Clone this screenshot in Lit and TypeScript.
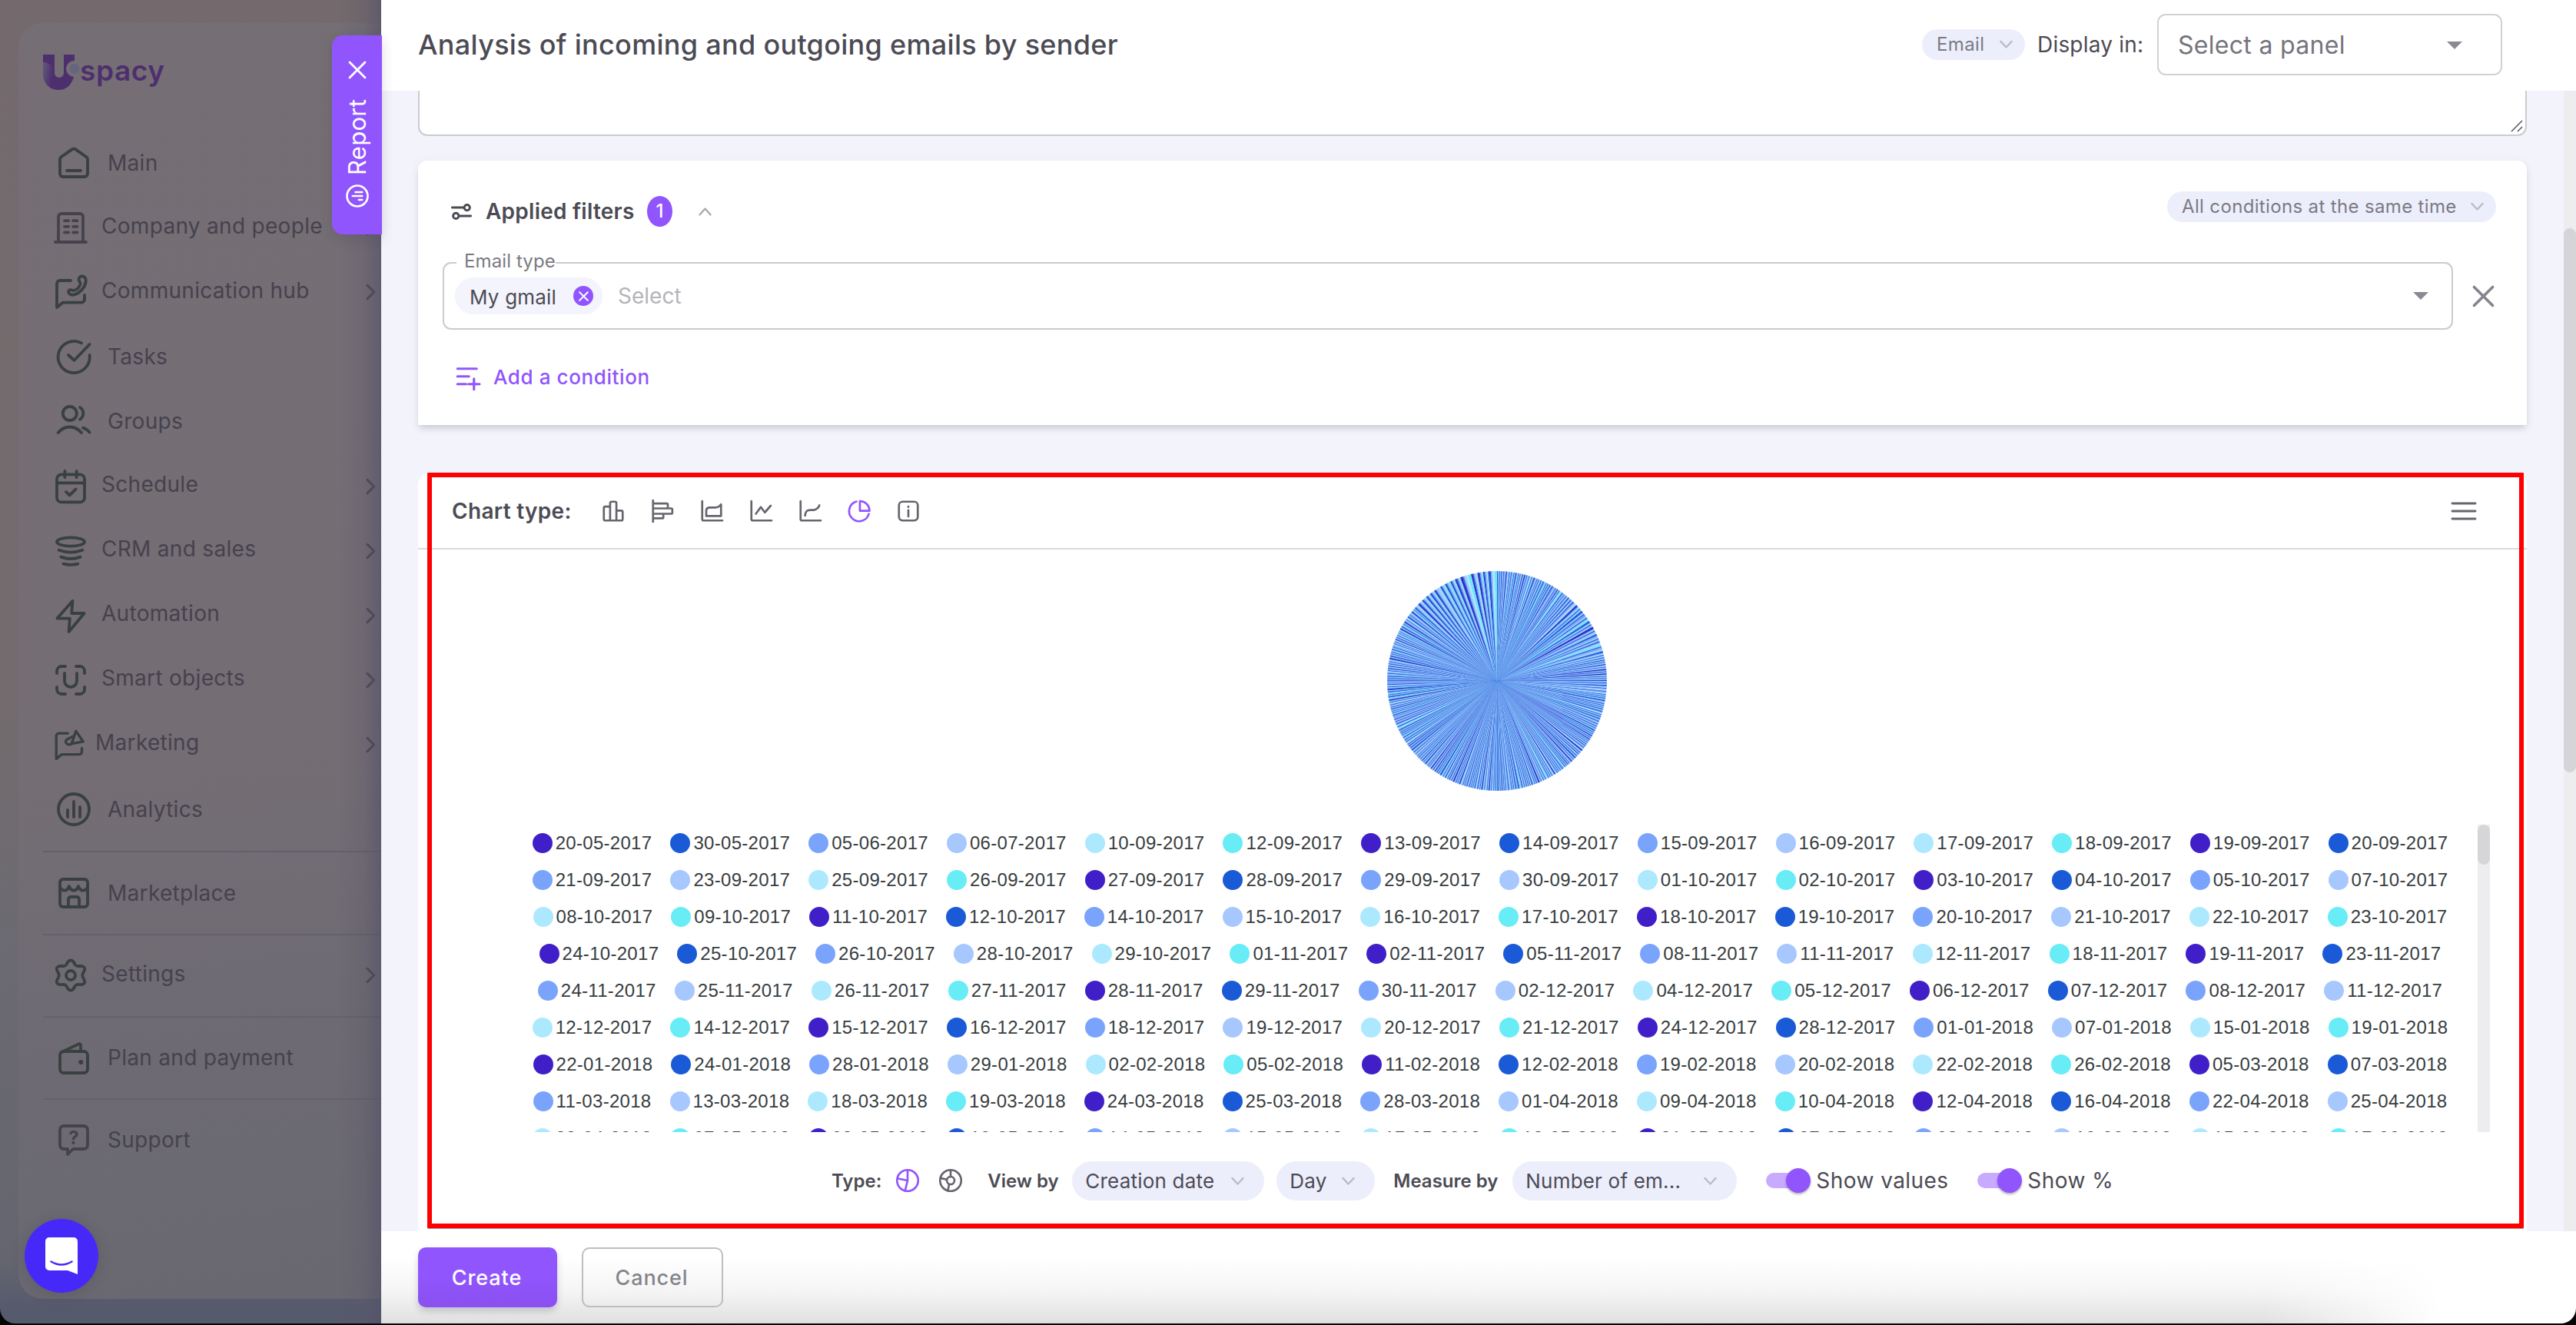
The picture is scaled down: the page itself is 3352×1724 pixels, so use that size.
import { LitElement, html, svg, css, nothing } from "lit";
import { customElement, property } from "lit/decorators.js";

const icons: Record<string, any> = {
  home: svg`<path d="M3 9.6q0-1 .8-1.5l7-4.9q1.2-.8 2.4 0l7 4.9q.8.5.8 1.5V19a2 2 0 0 1-2 2H5a2 2 0 0 1-2-2zM7.5 17h9"/>`,
  company: svg`<path d="M4 21V5a2 2 0 0 1 2-2h12a2 2 0 0 1 2 2v16M2 21.5h20M8 7.6h2.6M13.6 7.6h2.6M8 11.4h2.6M13.6 11.4h2.6M8 15.2h2.6M13.6 15.2h2.6"/>`,
  hub: svg`<path d="M12 4.5H5a2 2 0 0 0-2 2V22l4-3.2h12a2 2 0 0 0 2-2V14"/><path d="M17.4 4.4c-.4-1.8 1-3 2.4-2.7 1.600.4 2.400 1.900 2 3.800-.8 4-4 7.400-8 8.300-2.200.4-4.300-1.800-2.700-3.100 1-.7 2.200.6 3.300.2 2-.7 3.400-2.200 3.900-4.200.2-.9-.7-1.400-.9-2.300z"/>`,
  tasks: svg`<path d="M17 3.200a10.300 10.300 0 1 0 5.300 7.800M8.500 11l3.800 3.400L22.300 4"/>`,
  groups: svg`<circle cx="9.400" cy="7" r="4.500"/><path d="M1.800 19.500c4.200-5 10.900-5 15.200 0M16 3a4.600 4.600 0 0 1 0 7.800M18 16.300q2.500.8 4.300 3"/>`,
  schedule: svg`<rect x="3" y="4.200" width="18" height="18" rx="3"/><path d="M3 9.700h18M8.200 2v4M15.800 2v4M9 15.500l2.300 2.200 4-4"/>`,
  crm: svg`<ellipse cx="12" cy="6" rx="9" ry="2.800"/><path d="M4.300 11.400q7.700 2.800 15.400 0M5.700 15.800q6.300 2.400 12.600 0M7.300 20.300q4.700 1.200 9.400 0"/>`,
  zap: svg`<path d="M13.200 2.500 3.200 13.800h8.200l-.6 8.700 10-12h-8.200z"/>`,
  smart: svg`<path d="M3 7.500V6a3 3 0 0 1 3-3h2.500M15.500 3H18a3 3 0 0 1 3 3v1.500M21 16.500V18a3 3 0 0 1-3 3h-2.500M8.500 21H6a3 3 0 0 1-3-3v-1.500M8 7.500v5a4 4 0 0 0 8 0v-5"/>`,
  marketing: svg`<path d="M11.500 3.500H5a2 2 0 0 0-2 2v17l4-3.300h13a2 2 0 0 0 2-2v-2.700"/><path d="M17.600 1.800l5.400 7.900-8.600 1.500z M16 5.500l-5 2.500c-2.500 2 .500 5.200 3.400 3.200"/>`,
  analytics: svg`<circle cx="12" cy="12" r="10"/><path d="M8 12.500V17M12 7v10M16 10.500V17"/>`,
  store: svg`<rect x="3" y="3" width="18" height="18" rx="2"/><path d="M3 8q1 2.300 3 2.300T9 7.500q1 2.800 3 2.800t3-2.800q1 2.800 3 2.800T21 8M8.500 21v-5a1.500 1.500 0 0 1 1.500-1.500h4a1.500 1.500 0 0 1 1.500 1.500v5"/>`,
  settings: svg`<circle cx="12" cy="12" r="3"/><path d="M10 3.500q2-2.600 4 0l.8 1.500q.8 1.200 2.300 1l1.700-.1q3.100.3 2 3.200l-.8 1.500q-.7 1.400 0 2.800l.8 1.500q1.100 2.900-2 3.200l-1.700-.1q-1.500-.2-2.300 1l-.8 1.500q-2 2.600-4 0l-.8-1.500q-.8-1.200-2.300-1l-1.700.1q-3.100-.3-2-3.200l.8-1.500q.7-1.400 0-2.800l-.8-1.500q-1.100-2.900 2-3.200l1.700.1q1.500.2 2.300-1z"/>`,
  wallet: svg`<rect x="3" y="8" width="18" height="14" rx="2.500"/><path d="M4 8.500 15 3.300q1.500-.6 1.500 1V8"/><circle cx="16.600" cy="15" r="1" fill="currentColor" stroke-width="1"/>`,
  support: svg`<path d="M5.500 3h13A2.500 2.500 0 0 1 21 5.500v10a2.500 2.500 0 0 1-2.500 2.500h-7L8 21.500V18H5.500A2.500 2.500 0 0 1 3 15.500v-10A2.500 2.500 0 0 1 5.500 3z"/><text x="12" y="15" text-anchor="middle" font-family="Inter" font-size="12" font-weight="700" fill="currentColor" stroke="none">?</text>`,
  right: svg`<path d="M9.500 6.500 15 12l-5.500 5.500"/>`,
  down: svg`<path d="M3 7.500l9 9.500 9-9.500"/>`,
  up: svg`<path d="M3 17l9-10 9 10"/>`,
  close: svg`<path d="M2 2l20 20M22 2 2 22"/>`,
  caret: svg`<path d="M0 6h24L12 18z" fill="currentColor" stroke="none"/>`,
  filters: svg`<path d="M2 7.500h12.500M9.500 16.500H22"/><circle cx="18" cy="7.500" r="3"/><circle cx="6" cy="16.500" r="3"/>`,
  add: svg`<path d="M1 3h20M1 11h12M1 19h9M12.500 19H24M18.200 13.500v11"/>`,
  column: svg`<path d="M1.500 8.500a1.500 1.500 0 0 1 1.500-1.500h5.500v15.500H3a1.500 1.500 0 0 1-1.500-1.500zM8.500 22.500V3a1.500 1.500 0 0 1 1.500-1.500h4a1.500 1.500 0 0 1 1.500 1.500v19.500zM15.500 11.500H21a1.500 1.500 0 0 1 1.500 1.500v8a1.500 1.500 0 0 1-1.500 1.500h-5.500"/>`,
  bar: svg`<path d="M1.500 0v24M1.500 3.500H17a1 1 0 0 1 1 1v4.500H1.500M1.500 9H22a1 1 0 0 1 1 1v4a1 1 0 0 1-1 1H1.500M13 15v4a1 1 0 0 1-1 1H1.500"/>`,
  area: svg`<path d="M1.500 1v20a1.500 1.500 0 0 0 1.500 1.500h21"/><path d="M6 17.500v-6q0-3 3-3.500h7q4 0 6.500-3.500v13z"/>`,
  line: svg`<path d="M1.500 1v20a1.500 1.500 0 0 0 1.500 1.500h21M6.500 15l5.500-7.500 4.500 6L23 6"/>`,
  spline: svg`<path d="M1.500 1v20a1.500 1.500 0 0 0 1.500 1.500h21M6.500 17c1-9 7-5 11-6.500q4-1.500 5-5"/>`,
  pie: svg`<path d="M9 1.300A11.200 11.200 0 1 0 22.800 15M12.800 1v10.700h10.700A10.700 10.700 0 0 0 12.800 1z"/>`,
  info: svg`<rect x="1.500" y="1.500" width="21" height="21" rx="4"/><path d="M12 11v7M12 7v.5"/>`,
  menu: svg`<path d="M0 4h24M0 12h24M0 20h24"/>`,
  pieType: svg`<circle cx="12" cy="12" r="11"/><path d="M12 1v11l-2.600 10.500M12 12 2 10"/>`,
  donutType: svg`<circle cx="12" cy="12" r="11"/><circle cx="12" cy="12" r="4"/><path d="M12 1v7M8 11l-6.500-1.500M10.500 16 9 22.500"/>`,
  report: svg`<circle cx="12" cy="12" r="10.800"/><path d="M8 13.500v3.500M12 7v10M16 10v7"/>`,
};

const icon = (name: string, size: number, stroke = 2) => html`
  <svg width=${size} height=${size} viewBox="0 0 24 24" fill="none" stroke="currentColor"
    stroke-width=${stroke} stroke-linecap="round" stroke-linejoin="round" style="display:block;flex:none;overflow:visible">
    ${icons[name]}
  </svg>`;

interface MenuItem {
  icon: string;
  label: string;
  kind?: string;
  muted?: boolean;
}

const menu: MenuItem[][] = [
  [
    { icon: "home", label: "Main" },
    { icon: "company", label: "Company and people", kind: "group", muted: true },
    { icon: "hub", label: "Communication hub", kind: "group" },
    { icon: "tasks", label: "Tasks" },
    { icon: "groups", label: "Groups" },
    { icon: "schedule", label: "Schedule", kind: "group" },
    { icon: "crm", label: "CRM and sales", kind: "group" },
    { icon: "zap", label: "Automation", kind: "group" },
    { icon: "smart", label: "Smart objects", kind: "group" },
    { icon: "marketing", label: "Marketing", kind: "group small" },
    { icon: "analytics", label: "Analytics" },
  ],
  [{ icon: "store", label: "Marketplace" }],
  [{ icon: "settings", label: "Settings", kind: "group" }],
  [{ icon: "wallet", label: "Plan and payment" }],
  [{ icon: "support", label: "Support", muted: true }],
];

@customElement("side-menu")
export class SideMenu extends LitElement {
  static styles = css`
    :host {
      display: flex;
      flex: none;
      box-sizing: border-box;
      width: 496px;
      height: 1722px;
      padding: 30px 0 32px 24px;
      background: linear-gradient(180deg, #746a6d 0, #736b6d 900px, #6b6a72 1250px, #65656f 1640px, #565a6d 1700px);
      border-bottom-left-radius: 20px;
      font-family: Inter, sans-serif;
      position: relative;
    }

    .panel {
      flex: 1;
      box-sizing: border-box;
      border-radius: 32px 0 0 32px;
      background: linear-gradient(172deg, #756e74 0, #746d74 58%, #6d6a73 80%, #696871 100%);
      padding-left: 32px;
    }

    .shade {
      position: absolute;
      inset: 0 0 0 auto;
      width: 56px;
      background: linear-gradient(90deg, rgba(90, 88, 105, 0), rgba(90, 86, 104, 0.25) 60%, rgba(85, 82, 105, 0.65));
    }

    .logo {
      display: flex;
      align-items: center;
      height: 46px;
      padding-top: 41px;
      margin-bottom: 53px;
      color: #4e2f6e;
    }

    .logo span {
      font-size: 37px;
      font-weight: 600;
      line-height: 46px;
      letter-spacing: 0.6px;
      margin: -4px 0 0 -2px;
    }

    .section + .section {
      border-top: 2px solid #63616a;
      margin-top: 12px;
      padding-top: 11px;
    }

    .section:nth-child(n + 4) {
      margin-top: 11px;
      padding-top: 10px;
    }

    .item {
      display: flex;
      align-items: center;
      height: 84.1px;
      padding-left: 16px;
      gap: 20px;
      color: #384040;
    }

    .item span {
      flex: 1;
      font-size: 28px;
      color: #45424d;
      letter-spacing: 0.3px;
      white-space: nowrap;
    }

    .item.muted {
      color: #45424d;
    }

    .item.group {
      padding-left: 12px;
      gap: 16px;
    }

    .item.group span {
      margin-top: -5px;
    }

    .item.group.small {
      gap: 14px;
    }

    .arrow {
      color: #45424d;
      margin-right: -5px;
    }
  `;

  render() {
    return html`
      <div class="panel">
        <div class="logo">
          <svg width="50" height="46" viewBox="0 0 50 46">
            <defs>
              <linearGradient id="u" x1="0" y1="0" x2="1" y2="0.2">
                <stop offset="0" stop-color="#62607a" />
                <stop offset="0.4" stop-color="#4e2f6e" />
              </linearGradient>
            </defs>
            <path fill="url(#u)" d="M0 0h15v24a6 6 0 0 0 12 0V0h14v8a10.500 10.500 0 0 0-1 21C37 40 30 46 20 46 8 46 0 37 0 25z" />
            <path fill="#4e2f6e" d="M0 0h15v24q-3-14-15-14z" />
            <circle cx="41" cy="18.500" r="6.500" fill="#65657e" />
          </svg>
          <span>spacy</span>
        </div>
        ${menu.map(
          (section) => html`
            <div class="section">
              ${section.map(
                (item) => html`
                  <div class="item ${item.kind ?? ""} ${item.muted ? "muted" : ""}">
                    ${icon(item.icon, item.kind?.includes("small") ? 42 : 48, 1.9)}
                    <span>${item.label}</span>
                    ${item.kind ? html`<div class="arrow">${icon("right", 38, 1.9)}</div>` : nothing}
                  </div>
                `
              )}
            </div>
          `
        )}
      </div>
      <div class="shade"></div>
    `;
  }
}

const palette = ["#411fc8", "#1a5ad7", "#7aa4fb", "#a7c7ff", "#ade9fe", "#68ecf6"];

const dates = [
  "20-05-2017 30-05-2017 05-06-2017 06-07-2017 10-09-2017 12-09-2017 13-09-2017 14-09-2017 15-09-2017 16-09-2017 17-09-2017 18-09-2017 19-09-2017 20-09-2017",
  "21-09-2017 23-09-2017 25-09-2017 26-09-2017 27-09-2017 28-09-2017 29-09-2017 30-09-2017 01-10-2017 02-10-2017 03-10-2017 04-10-2017 05-10-2017 07-10-2017",
  "08-10-2017 09-10-2017 11-10-2017 12-10-2017 14-10-2017 15-10-2017 16-10-2017 17-10-2017 18-10-2017 19-10-2017 20-10-2017 21-10-2017 22-10-2017 23-10-2017",
  "24-10-2017 25-10-2017 26-10-2017 28-10-2017 29-10-2017 01-11-2017 02-11-2017 05-11-2017 08-11-2017 11-11-2017 12-11-2017 18-11-2017 19-11-2017 23-11-2017",
  "24-11-2017 25-11-2017 26-11-2017 27-11-2017 28-11-2017 29-11-2017 30-11-2017 02-12-2017 04-12-2017 05-12-2017 06-12-2017 07-12-2017 08-12-2017 11-12-2017",
  "12-12-2017 14-12-2017 15-12-2017 16-12-2017 18-12-2017 19-12-2017 20-12-2017 21-12-2017 24-12-2017 28-12-2017 01-01-2018 07-01-2018 15-01-2018 19-01-2018",
  "22-01-2018 24-01-2018 28-01-2018 29-01-2018 02-02-2018 05-02-2018 11-02-2018 12-02-2018 19-02-2018 20-02-2018 22-02-2018 26-02-2018 05-03-2018 07-03-2018",
  "11-03-2018 13-03-2018 18-03-2018 19-03-2018 24-03-2018 25-03-2018 28-03-2018 01-04-2018 09-04-2018 10-04-2018 12-04-2018 16-04-2018 22-04-2018 25-04-2018",
  "28-04-2018 07-05-2018 08-05-2018 10-05-2018 14-05-2018 15-05-2018 17-05-2018 18-05-2018 21-05-2018 27-05-2018 03-06-2018 10-06-2018 15-06-2018 17-06-2018",
].map((row) => row.split(" "));

@customElement("pie-chart")
export class PieChart extends LitElement {
  static styles = css`
    :host {
      display: block;
    }
    svg {
      display: block;
    }
  `;

  @property({ type: Number }) radius = 143;

  // one slice per day; the last part of the range holds the busier days
  private slices() {
    let seed = 7;
    const random = () => {
      seed = (seed * 16807) % 2147483647;
      return seed / 2147483647;
    };
    const count = 1500;
    const values = Array.from({ length: count }, (_, i) => {
      const busy = i > count * 0.94 ? 2.8 : i > count * 0.12 && i < count * 0.19 ? 1.6 : 1;
      return busy * (0.7 + Math.pow(random(), 8) * 2.2);
    });
    const total = values.reduce((a, b) => a + b, 0);
    const r = this.radius;
    let angle = 0;
    return values.map((value, i) => {
      const next = angle + (value / total) * Math.PI * 2;
      const d = `M${r} ${r}L${r + r * Math.sin(angle)} ${r - r * Math.cos(angle)}A${r} ${r} 0 0 1 ${r + r * Math.sin(next)} ${r - r * Math.cos(next)}Z`;
      angle = next;
      return svg`<path d=${d} fill=${palette[i % palette.length]} />`;
    });
  }

  render() {
    const size = this.radius * 2;
    return html`
      <svg width=${size} height=${size} viewBox="0 0 ${size} ${size}">
        <circle cx=${this.radius} cy=${this.radius} r=${this.radius - 0.5} fill="#70a4f2" />
        ${this.slices()}
      </svg>
    `;
  }
}

@customElement("report-chart")
export class ReportChart extends LitElement {
  static styles = css`
    :host {
      display: block;
      position: relative;
      height: 1000px;
      background: #fff;
      border-radius: 16px 16px 0 0;
      font-family: Inter, sans-serif;
      color: #4c4b54;
    }

    .toolbar {
      display: flex;
      align-items: center;
      height: 100px;
      box-sizing: border-box;
      padding: 2px 67px 0 44px;
      border-bottom: 2px solid #dadae0;
    }

    .toolbar b {
      font-size: 28px;
      font-weight: 600;
      width: 196px;
      letter-spacing: 0.3px;
    }

    .types {
      display: flex;
      flex: 1;
      gap: 36px;
      color: #66656e;
    }

    .types .active,
    .controls .active {
      color: #9155fd;
    }

    .menu {
      color: #66656e;
    }

    .pie {
      display: flex;
      justify-content: center;
      padding: 28px 0 44px 64px;
    }

    .scroll {
      display: flex;
      justify-content: space-between;
      height: 400px;
      overflow: hidden;
      padding: 0 48px 0 125px;
    }

    .legend {
      width: 2540px;
      font: 24px/48px "Liberation Sans", Arial, sans-serif;
      letter-spacing: 0.3px;
      color: #373d3f;
    }

    .row {
      display: flex;
      justify-content: center;
      gap: 24px;
      height: 48px;
      white-space: nowrap;
    }

    .mark {
      display: flex;
      align-items: center;
      gap: 4px;
    }

    .dot {
      width: 26px;
      height: 26px;
      border-radius: 50%;
    }

    .track {
      width: 16px;
      background: #ededef;
    }

    .thumb {
      height: 52px;
      border-radius: 8px;
      background: #d6d6d9;
    }

    .controls {
      display: flex;
      align-items: center;
      padding: 37px 0 0 538px;
      height: 52px;
      font-size: 28px;
      white-space: nowrap;
    }

    .controls b {
      font-size: 24px;
      font-weight: 600;
    }

    .kinds {
      display: flex;
      gap: 26px;
      margin: 0 33px 0 19px;
      color: #66656e;
    }

    .chip {
      box-sizing: border-box;
      display: flex;
      align-items: center;
      justify-content: space-between;
      height: 51px;
      border-radius: 26px;
      background: #edeefc;
      padding: 0 25px 0 17px;
      font-size: 26px;
      letter-spacing: 0.2px;
    }

    .chip i {
      color: #bcbcc4;
    }

    .toggle {
      display: flex;
      align-items: center;
      gap: 7px;
      letter-spacing: 0.45px;
    }

    .switch {
      display: flex;
      align-items: center;
      justify-content: flex-end;
      width: 58px;
      height: 20px;
      border-radius: 10px;
      background: linear-gradient(90deg, #c8aafe 48px, transparent 48px);
    }

    .knob {
      width: 32px;
      height: 32px;
      border-radius: 50%;
      background: #9155fd;
      box-shadow: 0 2px 3px rgba(0, 0, 0, 0.3);
    }

    .highlight {
      position: absolute;
      left: 12px;
      top: 0;
      width: 2728px;
      height: 983px;
      box-sizing: border-box;
      border: 6px solid #fe0000;
      border-radius: 1px;
      box-shadow: 0 1px 0 rgba(60, 60, 60, 0.5);
    }
  `;

  chip(label: string, width: number) {
    return html`<div class="chip" style="width:${width}px">${label}<i>${icon("down", 19, 3)}</i></div>`;
  }

  toggle(label: string) {
    return html`<div class="toggle"><div class="switch"><div class="knob"></div></div>${label}</div>`;
  }

  render() {
    const types = ["column", "bar", "area", "line", "spline", "pie", "info"];
    return html`
      <div class="toolbar">
        <b>Chart type:</b>
        <div class="types">
          ${types.map((t) => html`<div class=${t === "pie" ? "active" : ""}>${icon(t, 28, 2.3)}</div>`)}
        </div>
        <div class="menu">${icon("menu", 30, 2.3)}</div>
      </div>
      <div class="pie"><pie-chart></pie-chart></div>
      <div class="scroll">
        <div class="legend">
          ${dates.map(
            (row, r) => html`
              <div class="row">
                ${row.map(
                  (date, c) => html`
                    <div class="mark">
                      <div class="dot" style="background:${palette[(r * 14 + c) % 6]}"></div>
                      ${date}
                    </div>
                  `
                )}
              </div>
            `
          )}
        </div>
        <div class="track"><div class="thumb"></div></div>
      </div>
      <div class="controls">
        <b>Type:</b>
        <div class="kinds">
          <div class="active">${icon("pieType", 30, 2.1)}</div>
          ${icon("donutType", 30, 2.1)}
        </div>
        <b style="width:110px">View by</b>
        ${this.chip("Creation date", 250)}
        <div style="width:16px"></div>
        ${this.chip("Day", 128)}
        <b style="width:155px;margin-left:24px">Measure by</b>
        ${this.chip("Number of em...", 292)}
        <div style="width:38px"></div>
        <div style="width:275px">${this.toggle("Show values")}</div>
        ${this.toggle("Show %")}
      </div>
      <div class="highlight"></div>
    `;
  }
}

@customElement("app-root")
export class AppRoot extends LitElement {
  static styles = css`
    :host {
      display: flex;
      width: 3352px;
      height: 1724px;
      background: #050507;
      font-family: Inter, sans-serif;
      color: #4c4b54;
      overflow: hidden;
      position: relative;
    }

    .drawer {
      position: relative;
      display: flex;
      flex-direction: column;
      width: 2856px;
      height: 1722px;
    }

    .tab {
      position: absolute;
      left: -64px;
      top: 46px;
      width: 65px;
      height: 259px;
      box-sizing: border-box;
      padding: 33px 0 34px;
      border-radius: 14px 0 0 14px;
      background: #9155fd;
      color: #fff;
      display: flex;
      flex-direction: column;
      align-items: center;
      box-shadow: 0 6px 16px rgba(60, 50, 90, 0.18);
    }

    .tab span {
      writing-mode: vertical-rl;
      transform: rotate(180deg);
      height: 102px;
      margin: 23px 0 12px;
      font-size: 31px;
      line-height: 36px;
      letter-spacing: 0.3px;
      white-space: nowrap;
    }

    .tab .mark {
      transform: rotate(-90deg);
    }

    header {
      display: flex;
      align-items: center;
      height: 118px;
      flex: none;
      box-sizing: border-box;
      padding: 0 96px 3px 48px;
      background: #fff;
      white-space: nowrap;
    }

    h1 {
      flex: 1;
      margin: 0;
      font-size: 36px;
      font-weight: 500;
      letter-spacing: 0.3px;
    }

    .chip {
      display: flex;
      align-items: center;
      justify-content: space-between;
      box-sizing: border-box;
      height: 40px;
      border-radius: 20px;
      padding: 0 15px 0 19px;
      background: #edeefc;
      color: #7b7a82;
      font-size: 24px;
      letter-spacing: 0.35px;
    }

    .chip i {
      color: #bcbcc4;
    }

    .display {
      width: 156px;
      margin-left: 16px;
      font-size: 28px;
      letter-spacing: 0.2px;
    }

    .select {
      display: flex;
      align-items: center;
      justify-content: space-between;
      box-sizing: border-box;
      width: 449px;
      height: 80px;
      padding: 2px 50px 0 25px;
      border: 2px solid #d2d2d6;
      border-radius: 11px;
      font-size: 32px;
      letter-spacing: 0.3px;
      color: #75747c;
    }

    .caret {
      color: #8b8a92;
    }

    .body {
      display: flex;
      height: 1484px;
      background: #f3f4fb;
      overflow: hidden;
    }

    .content {
      width: 2744px;
      padding: 0 48px;
      flex: none;
    }

    .note {
      display: flex;
      justify-content: flex-end;
      align-items: flex-end;
      box-sizing: border-box;
      height: 59px;
      padding: 0 3px 3px;
      background: #fff;
      border: 2px solid #cbcbd0;
      border-top: 0;
      border-radius: 0 0 12px 12px;
      margin-bottom: 32px;
    }

    .filters {
      box-sizing: border-box;
      height: 344px;
      padding: 40px 40px 0 32px;
      background: #fff;
      border-radius: 12px 12px 0 0;
      box-shadow: 0 6px 8px -2px rgba(50, 50, 70, 0.18), 0 2px 14px rgba(50, 50, 70, 0.06);
      margin-bottom: 62px;
    }

    .title {
      display: flex;
      align-items: center;
      height: 52px;
      padding-left: 10px;
      font-size: 28px;
      font-weight: 600;
    }

    .title .chip {
      width: 428px;
      font-weight: 400;
      margin: -13px 0 0 auto;
    }

    .title span {
      width: 210px;
      margin-left: 17px;
      white-space: nowrap;
      letter-spacing: 0.25px;
    }

    .badge {
      width: 33px;
      height: 40px;
      line-height: 40px;
      border-radius: 50%;
      background: #9155fd;
      color: #fff;
      font-size: 24px;
      font-weight: 500;
      text-align: center;
      margin-right: 33px;
    }

    .title > .up {
      color: #a3a3a8;
    }

    .line {
      display: flex;
      align-items: center;
      justify-content: space-between;
      margin-top: 40px;
      padding-right: 2px;
      color: #85848c;
    }

    .field {
      position: relative;
      display: flex;
      align-items: center;
      box-sizing: border-box;
      width: 2616px;
      height: 88px;
      padding: 0 30px 0 14px;
      border: 2px solid #cbcbd0;
      border-radius: 11px;
      font-size: 28px;
    }

    .label {
      position: absolute;
      left: 16px;
      top: -18px;
      padding-left: 10px;
      background: #fff;
      font-size: 24px;
      line-height: 30px;
      letter-spacing: 0.1px;
      color: #7b7a82;
    }

    .tag {
      display: flex;
      align-items: center;
      justify-content: space-between;
      box-sizing: border-box;
      width: 192px;
      height: 48px;
      padding: 2px 12px 0 19px;
      border-radius: 24px;
      background: #f3f4fc;
      color: #4c4b54;
      font-size: 26px;
      letter-spacing: 0.2px;
    }

    .remove {
      display: grid;
      place-items: center;
      width: 26px;
      height: 26px;
      margin-top: -2px;
      border-radius: 50%;
      background: #9155fd;
      color: #fff;
    }

    .hint {
      flex: 1;
      margin-left: 20px;
      color: #b4b4b9;
    }

    .add {
      display: flex;
      align-items: center;
      gap: 18px;
      margin: 46px 0 0 18px;
      font-size: 26px;
      font-weight: 500;
      letter-spacing: 0.6px;
      color: #9155fd;
    }

    .rail {
      width: 16px;
      background: #ededef;
    }

    .thumb {
      margin-top: 179px;
      height: 708px;
      border-radius: 8px;
      background: #d5d5d9;
    }

    footer {
      display: flex;
      align-items: flex-start;
      gap: 32px;
      box-sizing: border-box;
      height: 120px;
      padding: 21px 48px;
      background:
        linear-gradient(90deg, rgba(255, 255, 255, 0) 2450px, #fff 2680px),
        linear-gradient(180deg, #fff 35px, #f4f4f4 80px, #e0e0e1 120px);
      border-bottom-right-radius: 20px;
      font-size: 27px;
      font-weight: 500;
    }

    .button {
      display: grid;
      place-items: center;
      box-sizing: border-box;
      width: 181px;
      height: 78px;
      border-radius: 10px;
      background: linear-gradient(180deg, #9155fd 45%, #8a50ef);
      color: #fff;
      letter-spacing: 0.9px;
      padding-right: 2px;
      box-shadow: 0 5px 9px rgba(60, 50, 90, 0.22);
    }

    .button.plain {
      width: 184px;
      background: transparent;
      border: 2px solid #bdbdc2;
      color: #85848c;
      box-shadow: none;
    }

    .chat {
      position: absolute;
      left: 32px;
      top: 1586px;
      width: 96px;
      height: 96px;
      border-radius: 50%;
      background: #4629f8;
      display: grid;
      place-items: center;
      box-shadow: 0 2px 20px rgba(0, 0, 0, 0.12);
    }
  `;

  render() {
    return html`
      <side-menu></side-menu>
      <div class="drawer">
        <header>
          <h1>Analysis of incoming and outgoing emails by sender</h1>
          <div class="chip" style="width:134px">Email<i>${icon("down", 19, 3)}</i></div>
          <div class="display">Display in:</div>
          <div class="select">Select a panel<div class="caret">${icon("caret", 20)}</div></div>
        </header>
        <div class="body">
          <div class="content">
            <div class="note">
              <svg width="16" height="16" viewBox="0 0 16 16" stroke="#55555c" stroke-width="1.500">
                <path d="M1 15 15 1M9 15l6-6" />
              </svg>
            </div>
            <div class="filters">
              <div class="title">
                ${icon("filters", 29, 2.4)}
                <span>Applied filters</span>
                <div class="badge">1</div>
                <div class="up">${icon("up", 19, 2.6)}</div>
                <div class="chip">All conditions at the same time<i>${icon("down", 19, 3)}</i></div>
              </div>
              <div class="line">
                <div class="field">
                  <div class="label">Email type</div>
                  <div class="tag">My gmail<div class="remove">${icon("close", 13, 3.6)}</div></div>
                  <div class="hint">Select</div>
                  <div class="caret">${icon("caret", 20)}</div>
                </div>
                ${icon("close", 29, 3)}
              </div>
              <div class="add">${icon("add", 30, 2.5)}Add a condition</div>
            </div>
            <report-chart></report-chart>
          </div>
          <div class="rail"><div class="thumb"></div></div>
        </div>
        <footer>
          <div class="button">Create</div>
          <div class="button plain">Cancel</div>
        </footer>
        <div class="tab">
          ${icon("close", 24, 2.8)}
          <span>Report</span>
          <div class="mark">${icon("report", 30, 2.1)}</div>
        </div>
      </div>
      <div class="chat">
        <svg width="42" height="48" viewBox="0 0 42 48">
          <path fill="#fff" d="M5 0h32a5 5 0 0 1 5 5v43l-13-5H5a5 5 0 0 1-5-5V5a5 5 0 0 1 5-5z" />
          <path d="M7.500 31.500q13.500 8 27 0" fill="none" stroke="#4629f8" stroke-width="2.500" stroke-linecap="round" />
        </svg>
      </div>
    `;
  }
}
